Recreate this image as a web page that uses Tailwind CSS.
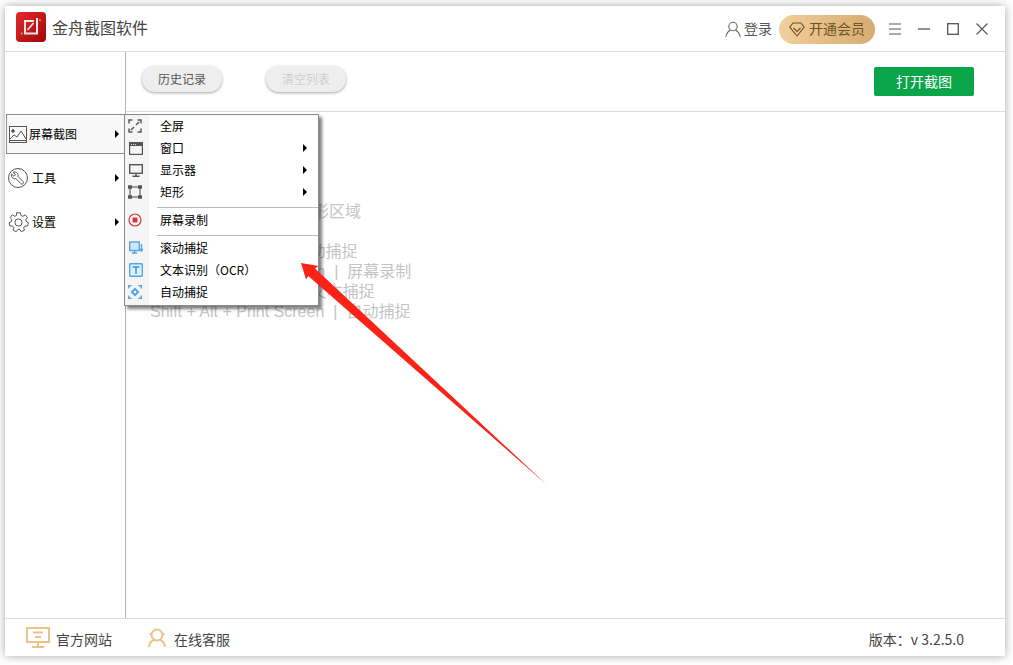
<!DOCTYPE html>
<html lang="zh-CN">
<head>
<meta charset="UTF-8">
<title>金舟截图软件</title>
<script src="https://cdn.jsdelivr.net/npm/@tailwindcss/browser@4"></script>
</head>
<body class="relative w-[1013px] h-[665px] overflow-hidden bg-white pl-[5px] pt-[6px] font-['Noto_Sans_CJK_SC',sans-serif]">
  <div class="relative flex flex-col w-[1000px] h-[650px] bg-white shadow-[0_0_9px_rgba(0,0,0,0.35)]">

    <!-- title bar -->
    <header class="flex items-center h-[46px] border-b border-[#dcdcdc] shrink-0">
      <svg class="ml-[11px] mt-[-3px]" width="30" height="30" viewBox="0 0 30 30" fill="none">
        <defs>
          <linearGradient id="logo" x1="0" y1="0" x2="1" y2="1">
            <stop offset="0" stop-color="#e32a2c"/>
            <stop offset="1" stop-color="#a00709"/>
          </linearGradient>
        </defs>
        <rect width="30" height="30" rx="4" fill="url(#logo)"/>
        <path d="M9 22V9h9M8 21.500h13V6" stroke="#f8e4e4" stroke-width="2"/>
        <path d="M11.500 18l6-7" stroke="#f8e4e4" stroke-width="1.800"/>
        <path d="M5 21.500h1.500M24 7.500v1.500" stroke="#f0b8b8" stroke-width="1.500"/>
      </svg>
      <span class="ml-[6px] mt-[-3px] text-[16px] leading-[24px] text-[#444]">金舟截图软件</span>
      <div class="ml-auto flex items-center mt-[2px]">
        <svg class="mt-[-1px]" width="16" height="17" viewBox="0 0 16 17" fill="none" stroke="#666" stroke-width="1.100">
          <circle cx="8" cy="5.500" r="4.200"/>
          <path d="M0.800 16c0.600-4 3.300-6.500 4.800-6.900M15.200 16c-0.600-4-3.300-6.500-4.800-6.900"/>
        </svg>
        <span class="ml-[3px] mt-[-3px] text-[14px] leading-[20px] text-[#555]">登录</span>
        <div class="ml-[7px] w-[96px] h-[29px] rounded-full bg-gradient-to-r from-[#f2cf9c] to-[#d6ab6e] flex items-center pl-[10px]">
          <svg width="16" height="15" viewBox="0 0 16 15" fill="none" stroke="#6f5228" stroke-width="1.100">
            <path d="M4 1h8l3.200 4.200L8 14 0.800 5.200z"/>
            <path d="M4.500 6L8 9.500 11.500 6"/>
          </svg>
          <span class="ml-[4px] mt-[-3px] text-[14px] leading-[20px] text-[#6f5228]">开通会员</span>
        </div>
        <svg class="ml-[14px] mt-[-2px]" width="12" height="12" viewBox="0 0 12 12" stroke="#555" stroke-width="1.200"><path d="M0 1h12M0 6h12M0 11h12"/></svg>
        <svg class="ml-[17px] mt-[-2px]" width="12" height="12" viewBox="0 0 12 12" stroke="#555" stroke-width="1.300"><path d="M0 6h12"/></svg>
        <svg class="ml-[17px] mt-[-2px]" width="12" height="12" viewBox="0 0 12 12" fill="none" stroke="#555" stroke-width="1.300"><rect x="0.700" y="0.700" width="10.600" height="10.600"/></svg>
        <svg class="ml-[17px] mr-[17px] mt-[-2px]" width="12" height="12" viewBox="0 0 12 12" stroke="#555" stroke-width="1.100"><path d="M0.500 0.500l11 11M11.500 0.500l-11 11"/></svg>
      </div>
    </header>

    <div class="flex flex-1 min-h-0">
      <!-- sidebar -->
      <aside class="w-[121px] shrink-0 border-r border-[#b4b4b4] pt-[60px]">
        <div class="h-[44px] py-[2px] pl-[1px]">
          <div class="flex items-center h-[40px] border border-r-0 border-[#8a8a8a] bg-[#f9f9f9] pl-[2px]">
            <svg width="18" height="17" viewBox="0 0 18 17" fill="none" stroke="#555" stroke-width="1">
              <rect x="0.500" y="0.500" width="17" height="16"/>
              <circle cx="4" cy="5" r="1.300" fill="#555"/>
              <path d="M1 13l4-4 3 2 4-6 5 8M1 14.500h16"/>
            </svg>
            <span class="ml-[2px] text-[12px] leading-[16px] text-black">屏幕截图</span>
            <span class="ml-auto mr-[6px] w-0 h-0 border-y-[4px] border-y-transparent border-l-[4px] border-l-black"></span>
          </div>
        </div>
        <div class="flex items-center h-[44px] pl-[3px]">
          <svg width="20" height="20" viewBox="0 0 20 20" fill="none" stroke="#555" stroke-width="1">
            <circle cx="10" cy="10" r="9.500"/>
            <path d="M5 4.500c1.500-0.800 3.400-0.500 4.400 0.700 0.800 1 1 2.200 0.600 3.300l5 5c0.700 0.700 0.700 1.600 0.100 2.200s-1.500 0.600-2.200-0.100l-5-5c-1.200 0.400-2.500 0.100-3.400-0.800-1-1-1.300-2.400-0.800-3.700l2.200 2.100 1.800-1.600z"/>
          </svg>
          <span class="ml-[4px] text-[12px] leading-[16px] text-black">工具</span>
          <span class="ml-auto mr-[6px] w-0 h-0 border-y-[4px] border-y-transparent border-l-[4px] border-l-black"></span>
        </div>
        <div class="flex items-center h-[44px] pl-[3px]">
          <svg width="21" height="21" viewBox="0 0 21 21" fill="none" stroke="#555" stroke-width="1">
            <circle cx="10.500" cy="10.500" r="3.600"/>
            <path d="M8.600 0.800h3.800l0.600 2.700 1.900 0.800 2.300-1.500 2.200 2.700-1.600 2.200 0.600 2 2.100 1-0.900 3.300-2.600 0-1.300 1.700 0.700 2.600-3.100 1.400-1.500-2.200h-2l-1.500 2.200-3.100-1.400 0.700-2.600-1.300-1.700-2.600 0-0.900-3.300 2.100-1 0.600-2-1.600-2.200 2.200-2.700 2.300 1.500 1.900-0.800z"/>
          </svg>
          <span class="ml-[3px] text-[12px] leading-[16px] text-black">设置</span>
          <span class="ml-auto mr-[6px] w-0 h-0 border-y-[4px] border-y-transparent border-l-[4px] border-l-black"></span>
        </div>
      </aside>

      <!-- main -->
      <main class="flex-1 flex flex-col min-w-0">
        <div class="flex items-start h-[60px] border-b border-[#dcdcdc] pt-[14px] pl-[16px] pr-[31px] shrink-0">
          <button class="w-[80px] h-[26px] rounded-full bg-[#eeeeee] shadow-[0_1px_3px_rgba(0,0,0,0.35)] text-[12px] leading-[26px] text-[#555]">历史记录</button>
          <button class="ml-[44px] w-[80px] h-[26px] rounded-full bg-[#eeeeee] shadow-[0_1px_3px_rgba(0,0,0,0.35)] text-[12px] leading-[26px] text-[#cfcfcf]">清空列表</button>
          <button class="ml-auto mt-[1px] w-[100px] h-[29px] rounded-[2px] bg-[#0aa548] text-[14px] leading-[29px] text-white">打开截图</button>
        </div>
        <div class="pt-[90px] pl-[24px] text-[16px] leading-[20px] text-[#c4c4c4] font-['Liberation_Sans','Noto_Sans_CJK_SC',sans-serif]">
          <p>Alt + Print Screen<span class="mx-[9px]">|</span>矩形区域</p>
          <p>&nbsp;</p>
          <p>Ctrl + Scroll Lock<span class="mx-[9px]">|</span>滚动捕捉</p>
          <p>Alt + Shift + Print Screen<span class="mx-[9px]">|</span>屏幕录制</p>
          <p>Shift + Print Screen<span class="mx-[9px]">|</span>文本捕捉</p>
          <p>Shift + Alt + Print Screen<span class="mx-[9px]">|</span>自动捕捉</p>
        </div>
      </main>
    </div>

    <!-- footer -->
    <footer class="flex items-center h-[38px] border-t border-[#dcdcdc] shrink-0 text-[14px] leading-[20px] text-[#444]">
      <svg class="ml-[21px]" width="24" height="21" viewBox="0 0 24 21" fill="none" stroke="#ebc287" stroke-width="2">
        <rect x="1" y="1" width="22" height="14"/>
        <path d="M7 5.500h10M9 10h6M12 15v4M6 20h12"/>
      </svg>
      <span class="ml-[6px] mt-[2px]">官方网站</span>
      <svg class="ml-[36px]" width="18" height="20" viewBox="0 0 18 20" fill="none" stroke="#ebc287" stroke-width="2">
        <circle cx="9" cy="7" r="5.500"/>
        <path d="M1 19c0.500-4 3-6.500 5-7M17 19c-0.500-4-3-6.500-5-7M3 6H1.500M15 6h1.500"/>
      </svg>
      <span class="ml-[8px] mt-[2px]">在线客服</span>
      <span class="ml-auto mr-[41px] mt-[2px]">版本：v 3.2.5.0</span>
    </footer>

    <!-- context menu -->
    <div class="absolute left-[119px] top-[108px] w-[195px] h-[192px] border border-[#8a8a8a] bg-white shadow-[3px_3px_3px_rgba(0,0,0,0.5)] text-[12px] leading-[16px] text-black">
      <div class="absolute left-0 top-0 bottom-0 w-[24px] bg-[#f5f5f5]"></div>
      <div class="relative flex flex-col">
        <div class="flex items-center h-[22px]">
          <svg class="ml-[3px]" width="14" height="14" viewBox="0 0 14 14" fill="none" stroke="#5a5a5a" stroke-width="1.500"><path d="M1 4.500V1h3.500M9.500 1H13v3.500M1 9.500V13h3.500M9.500 13H13V9.500M3 11l3-3M11 3L8 6"/></svg>
          <span class="ml-[18px]">全屏</span>
        </div>
        <div class="flex items-center h-[22px]">
          <svg class="ml-[4px]" width="14" height="13" viewBox="0 0 14 13" fill="none" stroke="#555" stroke-width="1.200"><rect x="0.600" y="0.600" width="12.800" height="11.800"/><path d="M0.600 2.500h12.800" stroke-width="3"/><path d="M2 2.500h1M4 2.500h1M6 2.500h1" stroke="#ddd" stroke-width="1"/></svg>
          <span class="ml-[17px]">窗口</span>
          <span class="ml-auto mr-[11px] w-0 h-0 border-y-[4px] border-y-transparent border-l-[4px] border-l-black"></span>
        </div>
        <div class="flex items-center h-[22px]">
          <svg class="ml-[4px]" width="14" height="13" viewBox="0 0 14 13" fill="none" stroke="#555" stroke-width="1.400"><rect x="0.700" y="0.700" width="12.600" height="8.600"/><path d="M7 10v2M3.500 12.300h7"/></svg>
          <span class="ml-[17px]">显示器</span>
          <span class="ml-auto mr-[11px] w-0 h-0 border-y-[4px] border-y-transparent border-l-[4px] border-l-black"></span>
        </div>
        <div class="flex items-center h-[22px]">
          <svg class="ml-[3px]" width="14" height="14" viewBox="0 0 14 14" fill="none" stroke="#555" stroke-width="1.100"><rect x="2" y="2" width="10" height="10"/><path d="M0 2h4M10 2h4M0 12h4M10 12h4" stroke-width="3.600"/></svg>
          <span class="ml-[18px]">矩形</span>
          <span class="ml-auto mr-[11px] w-0 h-0 border-y-[4px] border-y-transparent border-l-[4px] border-l-black"></span>
        </div>
        <div class="h-[6px] pt-[4px] pl-[32px]"><div class="h-px bg-[#b8b8b8]"></div></div>
        <div class="flex items-center h-[22px]">
          <svg class="ml-[3px]" width="14" height="14" viewBox="0 0 14 14" fill="none"><circle cx="7" cy="7" r="6" stroke="#d8383a" stroke-width="1.200"/><rect x="4.500" y="4.500" width="5" height="5" rx="1" fill="#d8383a"/></svg>
          <span class="ml-[18px]">屏幕录制</span>
        </div>
        <div class="h-[6px] pt-[4px] pl-[32px]"><div class="h-px bg-[#b8b8b8]"></div></div>
        <div class="flex items-center h-[22px]">
          <svg class="ml-[4px]" width="14" height="14" viewBox="0 0 14 14" fill="none" stroke="#4ea6e8" stroke-width="1.400"><rect x="0.700" y="1" width="9.600" height="8.500" fill="#cfe6f8"/><path d="M3 12h5M5.500 9.500V12M12.500 3v6.500M11 8l1.500 2L14 8"/></svg>
          <span class="ml-[17px]">滚动捕捉</span>
        </div>
        <div class="flex items-center h-[22px]">
          <svg class="ml-[4px]" width="14" height="14" viewBox="0 0 14 14" fill="#e4f2fc" stroke="#4ea6e8" stroke-width="1.400"><rect x="0.700" y="0.700" width="12.600" height="12.600" rx="1"/><path d="M3.500 4h7M7 4v7" stroke-width="1.800"/></svg>
          <span class="ml-[17px]">文本识别（OCR）</span>
        </div>
        <div class="flex items-center h-[22px]">
          <svg class="ml-[3px]" width="14" height="14" viewBox="0 0 14 14" fill="none" stroke="#4ea6e8" stroke-width="1.400"><path d="M0.700 3.500V0.700H3.500M10.500 0.700h2.800v2.800M0.700 10.500v2.800h2.800M10.500 13.300h2.800v-2.800"/><path d="M7 2.500l4.500 4.500L7 11.500 2.500 7z" fill="#4ea6e8" stroke="none"/><circle cx="7" cy="7" r="1.300" fill="#fff" stroke="none"/></svg>
          <span class="ml-[18px]">自动捕捉</span>
        </div>
      </div>
    </div>
  </div>

  <!-- annotation arrow -->
  <svg class="absolute left-0 top-0 pointer-events-none" width="1013" height="665" viewBox="0 0 1013 665">
    <polygon points="301,263 318.500,266 315,268.500 547,485 308.300,276 306,279.500" fill="#fb2217"/>
  </svg>
</body>
</html>
